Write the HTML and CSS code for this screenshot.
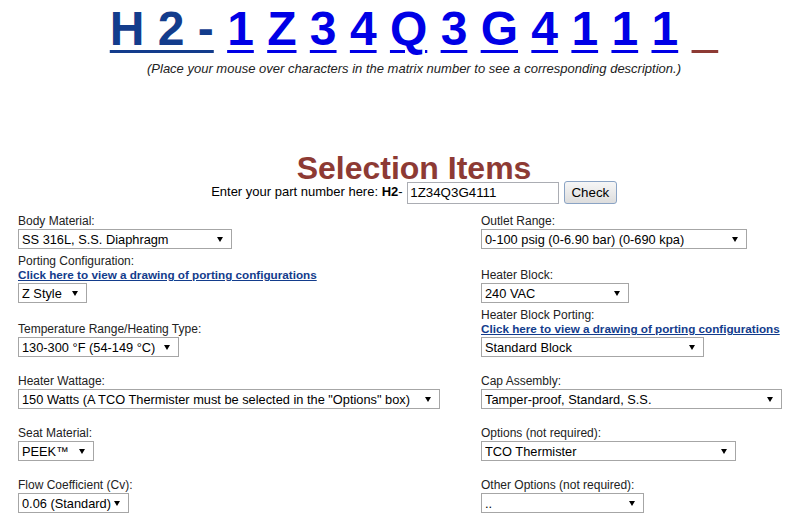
FILE: index.html
```html
<!DOCTYPE html>
<html lang="en">
<head>
  <meta charset="UTF-8" />
  <title>Selection Items</title>
  <link rel="stylesheet" href="styles.css">
</head>
<body>
  <div class="top">
    <div class="matrix">
      <a class="prefix" href="#">H 2 -</a>
      <a href="#">1</a>
      <a href="#">Z</a>
      <a href="#">3</a>
      <a href="#">4</a>
      <a href="#">Q</a>
      <a href="#">3</a>
      <a href="#">G</a>
      <a href="#">4</a>
      <a href="#">1</a>
      <a href="#">1</a>
      <a href="#">1</a>
      <a class="blank" href="#">&nbsp;&nbsp;</a>
    </div>
    <p class="hint">(Place your mouse over characters in the matrix number to see a corresponding description.)</p>
    <h1 class="title">Selection Items</h1>
    <form class="part-row">Enter your part number here: <b>H2</b>- <input type="text" value="1Z34Q3G4111"> <button type="button">Check</button></form>
  </div>

  <div class="form-grid">
    <div class="cell">
      <label>Body Material:</label>
      <span class="sel body-sel"><select><option>SS 316L, S.S. Diaphragm</option></select></span>
    </div>
    <div class="cell">
      <label>Outlet Range:</label>
      <span class="sel outlet-sel"><select><option>0-100 psig (0-6.90 bar) (0-690 kpa)</option></select></span>
    </div>

    <div class="cell">
      <label>Porting Configuration:</label>
      <a class="drawing-link" href="#">Click here to view a drawing of porting configurations</a>
      <span class="sel porting-sel"><select><option>Z Style</option></select></span>
    </div>
    <div class="cell">
      <label>Heater Block:</label>
      <span class="sel block-sel"><select><option>240 VAC</option></select></span>
    </div>

    <div class="cell">
      <label>Temperature Range/Heating Type:</label>
      <span class="sel temp-sel"><select><option>130-300 °F (54-149 °C)</option></select></span>
    </div>
    <div class="cell">
      <label>Heater Block Porting:</label>
      <a class="drawing-link" href="#">Click here to view a drawing of porting configurations</a>
      <span class="sel block-porting-sel"><select><option>Standard Block</option></select></span>
    </div>

    <div class="cell">
      <label>Heater Wattage:</label>
      <span class="sel wattage-sel"><select><option>150 Watts (A TCO Thermister must be selected in the "Options" box)</option></select></span>
    </div>
    <div class="cell">
      <label>Cap Assembly:</label>
      <span class="sel cap-sel"><select><option>Tamper-proof, Standard, S.S.</option></select></span>
    </div>

    <div class="cell">
      <label>Seat Material:</label>
      <span class="sel seat-sel"><select><option>PEEK™</option></select></span>
    </div>
    <div class="cell">
      <label>Options (not required):</label>
      <span class="sel options-sel"><select><option>TCO Thermister</option></select></span>
    </div>

    <div class="cell">
      <label>Flow Coefficient (Cv):</label>
      <span class="sel flow-sel"><select><option>0.06 (Standard)</option></select></span>
    </div>
    <div class="cell">
      <label>Other Options (not required):</label>
      <span class="sel other-sel"><select><option>..</option></select></span>
    </div>
  </div>
</body>
</html>
```

FILE: styles.css
```css
    :root {
      --navy: #133c8c;
      --blue: #0000e6;
      --rust: #8d3a34;
      --text: #222;
      --font: "Liberation Sans", Arial, sans-serif;
    }

    body {
      margin: 0;
      font-family: var(--font);
      color: var(--text);
      background: #fff;
    }

    .top {
      padding-left: 38px;
      text-align: center;
    }

    .matrix {
      font-size: 48px;
      font-weight: bold;
      line-height: 55px;
      padding-top: 1px;
      white-space: nowrap;
    }

    .matrix a {
      color: var(--blue);
      text-decoration: underline;
      text-decoration-thickness: 3px;
      text-underline-offset: 5px;
    }

    .matrix a.prefix {
      color: var(--navy);
    }

    .matrix a.blank {
      color: var(--rust);
    }

    .hint {
      margin: 5px 0 0;
      font-size: 13px;
      font-style: italic;
      line-height: 15px;
    }

    .title {
      margin: 81px 0 0;
      font-size: 32px;
      line-height: 23px;
      color: var(--rust);
    }

    .part-row {
      margin: 0;
      height: 24px;
      font-size: 13px;
      line-height: 24px;
      color: #000;
    }

    .part-row input {
      width: 152px;
      height: 22px;
      box-sizing: border-box;
      margin: 0 1px 0 1px;
      padding: 0 2px;
      border: 1px solid #abadb3;
      font: 13.33px var(--font);
      color: #000;
      vertical-align: middle;
    }

    .part-row button {
      width: 53px;
      height: 23px;
      box-sizing: border-box;
      margin: 0;
      padding: 0;
      border: 1px solid #8aa3c4;
      border-radius: 3px;
      background: linear-gradient(#f6f6f6, #dddddd);
      font: 13.33px var(--font);
      color: #000;
      vertical-align: middle;
    }

    .form-grid {
      display: grid;
      grid-template-columns: 463px 1fr;
      grid-template-rows: 44px 49px 49px 47px 47px 47px;
      row-gap: 5px;
      align-items: end;
      margin-top: 1px;
      padding-left: 18px;
    }

    .cell {
      display: flex;
      flex-direction: column;
      align-items: flex-start;
    }

    .cell label {
      font-size: 12px;
      line-height: 14px;
    }

    .drawing-link {
      font-size: 11.7px;
      font-weight: bold;
      line-height: 14px;
      color: var(--navy);
      text-decoration: underline;
    }

    .sel {
      position: relative;
      display: block;
      margin-top: 1px;
    }

    .sel select {
      display: block;
      width: 100%;
      height: 20px;
      margin: 0;
      padding: 0 14px 0 3px;
      border: 1px solid #a6a6a6;
      border-radius: 0;
      background: #fff;
      font: 12.8px var(--font);
      color: #000;
      -webkit-appearance: none;
      appearance: none;
    }

    /* little filled arrow like the old windows dropdown */
    .sel::after {
      content: "";
      position: absolute;
      right: 9px;
      top: 8px;
      border-left: 3px solid transparent;
      border-right: 3px solid transparent;
      border-top: 5px solid #000;
      pointer-events: none;
    }

    .body-sel { width: 214px; }
    .porting-sel { width: 69px; }
    .temp-sel { width: 161px; }
    .wattage-sel { width: 422px; }
    .seat-sel { width: 76px; }
    .flow-sel { width: 111px; }
    .outlet-sel { width: 266px; }
    .block-sel { width: 148px; }
    .block-porting-sel { width: 223px; }
    .cap-sel { width: 301px; }
    .options-sel { width: 255px; }
    .other-sel { width: 163px; }
```
